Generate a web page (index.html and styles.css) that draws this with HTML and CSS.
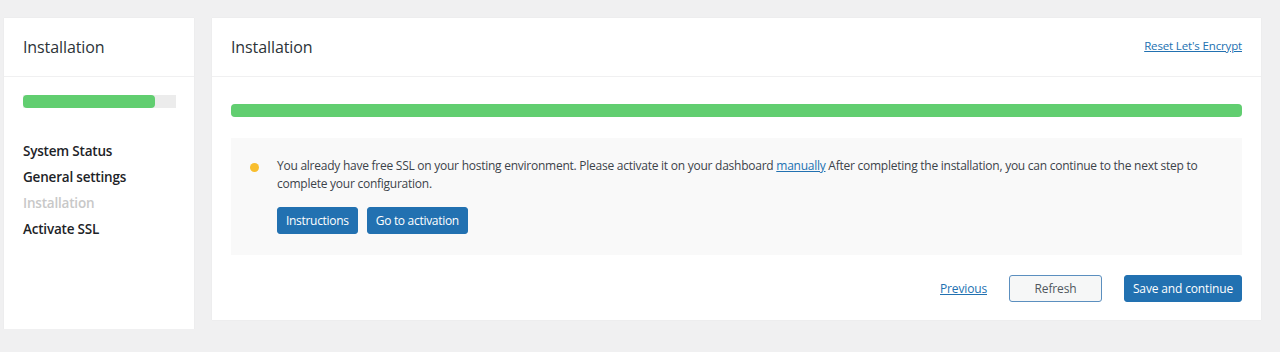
FILE: index.html
```html
<!DOCTYPE html>
<html lang="en">
<head>
    <meta charset="UTF-8">
    <meta name="viewport" content="width=device-width, initial-scale=1.0">
    <title>Installation</title>
    <link rel="stylesheet" href="styles.css">
</head>
<body>
    <div class="wizard">
        <div class="sidebar">
            <div class="card-header">
                <h2>Installation</h2>
            </div>
            <div class="sidebar-body">
                <div class="side-progress"><div class="side-progress-fill" style="width: 86%;"></div></div>
                <ul class="steps">
                    <li>System Status</li>
                    <li>General settings</li>
                    <li class="active">Installation</li>
                    <li>Activate SSL</li>
                </ul>
            </div>
        </div>

        <div class="main">
            <div class="card-header">
                <h2>Installation</h2>
                <a href="#" class="reset-link">Reset Let's Encrypt</a>
            </div>
            <div class="main-body">
                <div class="progress"><div class="progress-fill" style="width: 100%;"></div></div>

                <div class="notice">
                    <span class="dot"></span>
                    <div class="notice-content">
                        <p>You already have free SSL on your hosting environment. Please activate it on your dashboard <a href="#">manually</a> After completing the installation, you can continue to the next step to complete your configuration.</p>
                        <div class="notice-buttons">
                            <a href="#" class="btn btn-primary">Instructions</a>
                            <a href="#" class="btn btn-primary">Go to activation</a>
                        </div>
                    </div>
                </div>

                <div class="footer">
                    <a href="#" class="prev-link">Previous</a>
                    <a href="#" class="btn btn-outline">Refresh</a>
                    <a href="#" class="btn btn-primary btn-lg">Save and continue</a>
                </div>
            </div>
        </div>
    </div>
</body>
</html>
```

FILE: styles.css
```css
body {
    font-family: "Open Sans", Arial, sans-serif;
    background-color: #f0f0f1;
    margin: 0;
    padding: 0;
    color: #1d2327;
}
.wizard {
    display: flex;
    align-items: flex-start;
    gap: 18px;
    padding: 18px 19px 0 4px;
}
.sidebar {
    width: 190px;
    height: 311px;
    background-color: white;
    box-shadow: 0 0 1px rgba(0, 0, 0, 0.08);
}
.main {
    flex: 1;
    height: 302px;
    background-color: white;
    box-shadow: 0 0 1px rgba(0, 0, 0, 0.08);
}
.card-header {
    height: 58px;
    border-bottom: 1px solid #f0f0f1;
    display: flex;
    align-items: center;
    justify-content: space-between;
    padding: 0 19px;
}
.card-header h2 {
    margin: 0;
    font-size: 16px;
    font-weight: 400;
    color: #2c3338;
    letter-spacing: -0.1px;
}
.reset-link {
    font-size: 11.5px;
    color: #2271b1;
    margin-top: -4px;
    letter-spacing: -0.15px;
}
.sidebar-body {
    padding: 18px 18px 0 19px;
}
.side-progress {
    height: 13px;
    background-color: #ececec;
}
.side-progress-fill {
    height: 100%;
    background-color: #61ce70;
    border-radius: 4px;
}
.steps {
    list-style: none;
    margin: 30px 0 0 0;
    padding: 0;
}
.steps li {
    font-size: 13.5px;
    font-weight: 600;
    line-height: 26px;
    color: #1d2327;
    letter-spacing: -0.2px;
}
.steps li.active {
    color: #c8c8c8;
}
.main-body {
    padding: 27px 19px 0 19px;
}
.progress {
    height: 13px;
    background-color: #ececec;
    border-radius: 4px;
}
.progress-fill {
    height: 100%;
    background-color: #61ce70;
    border-radius: 4px;
}
.notice {
    margin-top: 21px;
    background-color: #f9f9f9;
    display: flex;
    padding: 19px 20px 20px 19px;
    height: 78px;
}
.dot {
    width: 9px;
    height: 9px;
    border-radius: 50%;
    background-color: #f8be2e;
    margin: 6px 18px 0 0;
    flex-shrink: 0;
}
.notice-content p {
    margin: 0;
    font-size: 12px;
    line-height: 18px;
    color: #3c434a;
    letter-spacing: -0.25px;
}
.notice-content p a {
    color: #2271b1;
}
.notice-buttons {
    display: flex;
    gap: 9px;
    margin-top: 14px;
}
.notice-buttons .btn {
    padding: 0 8px;
    letter-spacing: -0.3px;
}
.btn {
    display: inline-block;
    padding: 0 10px;
    height: 27px;
    line-height: 25px;
    font-size: 12px;
    text-decoration: none;
    border-radius: 3px;
    box-sizing: border-box;
    white-space: nowrap;
    letter-spacing: -0.15px;
}
.btn-primary {
    background-color: #2271b1;
    color: white;
    border: 1px solid #2271b1;
}
.btn-outline {
    background-color: #f6f7f7;
    color: #50575e;
    border: 1px solid #5b8fbf;
    width: 93px;
    text-align: center;
}
.btn-lg {
    width: 118px;
    padding: 0;
    text-align: center;
}
.footer {
    display: flex;
    justify-content: flex-end;
    align-items: center;
    gap: 22px;
    margin-top: 20px;
}
.prev-link {
    font-size: 12px;
    color: #2271b1;
    letter-spacing: -0.15px;
}
```
